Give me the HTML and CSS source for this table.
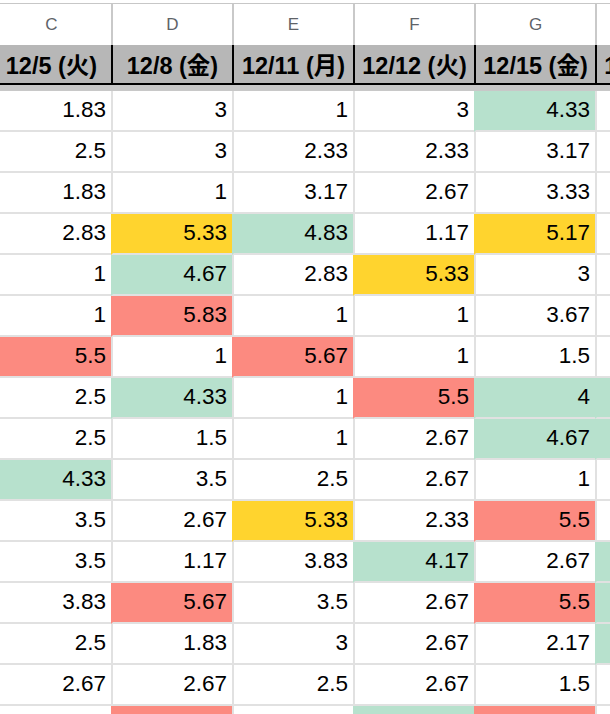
FILE: index.html
```html
<!DOCTYPE html>
<html lang="ja">
<head>
<meta charset="utf-8">
<title>Sheet</title>
<link rel="stylesheet" href="styles.css">
</head>
<body>
<div class="sheet">
  <div class="top-gap"></div>
  <div class="row letters">
    <div class="cell">C</div><div class="cell">D</div><div class="cell">E</div><div class="cell">F</div><div class="cell">G</div><div class="cell"></div>
  </div>
  <div class="row header">
    <div class="cell">12/5 (火)</div><div class="cell">12/8 (金)</div><div class="cell">12/11 (月)</div><div class="cell">12/12 (火)</div><div class="cell">12/15 (金)</div><div class="cell">12/19 (火)</div>
  </div>
  <div class="freeze"></div>
  <div class="row data"><div class="cell">1.83</div><div class="cell">3</div><div class="cell">1</div><div class="cell">3</div><div class="cell g">4.33</div><div class="cell"></div></div>
  <div class="row data"><div class="cell">2.5</div><div class="cell">3</div><div class="cell">2.33</div><div class="cell">2.33</div><div class="cell">3.17</div><div class="cell"></div></div>
  <div class="row data"><div class="cell">1.83</div><div class="cell">1</div><div class="cell">3.17</div><div class="cell">2.67</div><div class="cell">3.33</div><div class="cell"></div></div>
  <div class="row data"><div class="cell">2.83</div><div class="cell y">5.33</div><div class="cell g">4.83</div><div class="cell">1.17</div><div class="cell y">5.17</div><div class="cell"></div></div>
  <div class="row data"><div class="cell">1</div><div class="cell g">4.67</div><div class="cell">2.83</div><div class="cell y">5.33</div><div class="cell">3</div><div class="cell"></div></div>
  <div class="row data"><div class="cell">1</div><div class="cell r">5.83</div><div class="cell">1</div><div class="cell">1</div><div class="cell">3.67</div><div class="cell"></div></div>
  <div class="row data"><div class="cell r">5.5</div><div class="cell">1</div><div class="cell r">5.67</div><div class="cell">1</div><div class="cell">1.5</div><div class="cell"></div></div>
  <div class="row data"><div class="cell">2.5</div><div class="cell g">4.33</div><div class="cell">1</div><div class="cell r">5.5</div><div class="cell g">4</div><div class="cell g"></div></div>
  <div class="row data"><div class="cell">2.5</div><div class="cell">1.5</div><div class="cell">1</div><div class="cell">2.67</div><div class="cell g">4.67</div><div class="cell g"></div></div>
  <div class="row data"><div class="cell g">4.33</div><div class="cell">3.5</div><div class="cell">2.5</div><div class="cell">2.67</div><div class="cell">1</div><div class="cell"></div></div>
  <div class="row data"><div class="cell">3.5</div><div class="cell">2.67</div><div class="cell y">5.33</div><div class="cell">2.33</div><div class="cell r">5.5</div><div class="cell"></div></div>
  <div class="row data"><div class="cell">3.5</div><div class="cell">1.17</div><div class="cell">3.83</div><div class="cell g">4.17</div><div class="cell">2.67</div><div class="cell g"></div></div>
  <div class="row data"><div class="cell">3.83</div><div class="cell r">5.67</div><div class="cell">3.5</div><div class="cell">2.67</div><div class="cell r">5.5</div><div class="cell g"></div></div>
  <div class="row data"><div class="cell">2.5</div><div class="cell">1.83</div><div class="cell">3</div><div class="cell">2.67</div><div class="cell">2.17</div><div class="cell g"></div></div>
  <div class="row data"><div class="cell">2.67</div><div class="cell">2.67</div><div class="cell">2.5</div><div class="cell">2.67</div><div class="cell">1.5</div><div class="cell"></div></div>
  <div class="row data"><div class="cell"></div><div class="cell r"></div><div class="cell"></div><div class="cell g"></div><div class="cell r"></div><div class="cell"></div></div>
</div>
</body>
</html>
```

FILE: styles.css
```css
html, body {
  margin: 0;
  padding: 0;
  background: #ffffff;
  overflow: hidden;
}

body {
  width: 610px;
  height: 714px;
  font-family: "Liberation Sans", Arial, "Noto Sans CJK JP", sans-serif;
  color: #000000;
}

.sheet {
  margin-left: -10px;
  width: 726px;
}

.top-gap {
  height: 3px;
}

.row {
  display: grid;
  grid-template-columns: repeat(6, 121px);
}

.cell {
  box-sizing: border-box;
  white-space: nowrap;
  overflow: hidden;
}

.letters {
  border-top: 1px solid #c7c7c7;
}

.letters .cell {
  height: 41px;
  line-height: 41px;
  border-left: 2px solid #c9c9c9;
  text-align: center;
  font-size: 17px;
  color: #5f6368;
}

.header {
  background: #b7b7b7;
  border-bottom: 2px solid #000000;
}

.header .cell {
  height: 38px;
  padding-top: 4px;
  line-height: 34px;
  border-left: 2px solid #000000;
  text-align: center;
  font-size: 23.5px;
  font-weight: bold;
  overflow: visible;
}

.freeze {
  height: 6px;
  background: #c8c8c8;
}

.data .cell {
  height: 41px;
  line-height: 37px;
  border-left: 2px solid #e1e1e1;
  border-bottom: 2px solid #e1e1e1;
  padding-right: 5px;
  text-align: right;
  font-size: 22.5px;
}

.data .g {
  background: #b7e1cd;
  border-left-color: #b7e1cd;
}

.data .y {
  background: #ffd42e;
  border-left-color: #ffd42e;
}

.data .r {
  background: #fc8a80;
  border-left-color: #fc8a80;
}
```
